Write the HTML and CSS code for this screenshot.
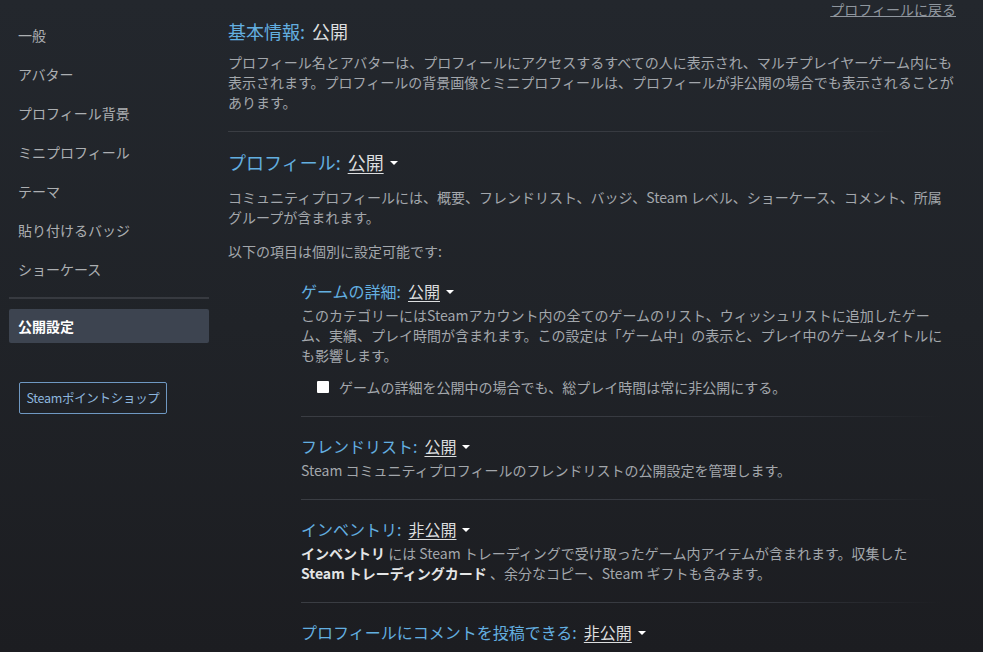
FILE: index.html
```html
<!DOCTYPE html>
<html lang="ja">
<head>
<meta charset="utf-8">
<link rel="stylesheet" href="styles.css">
</head>
<body>
<div class="page">
  <nav class="sidebar">
    <div class="nav-item">一般</div>
    <div class="nav-item">アバター</div>
    <div class="nav-item">プロフィール背景</div>
    <div class="nav-item">ミニプロフィール</div>
    <div class="nav-item">テーマ</div>
    <div class="nav-item">貼り付けるバッジ</div>
    <div class="nav-item">ショーケース</div>
    <div class="nav-sep"></div>
    <div class="nav-item active">公開設定</div>
    <div class="shop-btn">Steamポイントショップ</div>
  </nav>
  <main class="main">
    <div class="top-row"><a class="back-link">プロフィールに戻る</a></div>

    <div class="heading top h-basic"><span class="label">基本情報:</span><span class="value plain">公開</span></div>
    <p class="desc d-basic">プロフィール名とアバターは、プロフィールにアクセスするすべての人に表示され、マルチプレイヤーゲーム内にも<br>表示されます。プロフィールの背景画像とミニプロフィールは、プロフィールが非公開の場合でも表示されることが<br>あります。</p>
    <div class="sep sep-main"></div>

    <div class="heading top h-profile"><span class="label">プロフィール:</span><span class="value">公開</span><span class="caret"></span></div>
    <p class="desc d-profile">コミュニティプロフィールには、概要、フレンドリスト、バッジ、Steam レベル、ショーケース、コメント、所属<br>グループが含まれます。</p>
    <p class="desc d-note">以下の項目は個別に設定可能です:</p>

    <div class="sub">
      <div class="heading h-first"><span class="label">ゲームの詳細:</span><span class="value">公開</span><span class="caret"></span></div>
      <p class="desc sub-desc">このカテゴリーにはSteamアカウント内の全てのゲームのリスト、ウィッシュリストに追加したゲー<br>ム、実績、プレイ時間が含まれます。この設定は「ゲーム中」の表示と、プレイ中のゲームタイトルに<br>も影響します。</p>
      <label class="check-row"><span class="checkbox"></span><span>ゲームの詳細を公開中の場合でも、総プレイ時間は常に非公開にする。</span></label>
      <div class="sep sep-sub"></div>

      <div class="heading h-next"><span class="label">フレンドリスト:</span><span class="value">公開</span><span class="caret"></span></div>
      <p class="desc sub-desc">Steam コミュニティプロフィールのフレンドリストの公開設定を管理します。</p>
      <div class="sep sep-sub"></div>

      <div class="heading h-next"><span class="label">インベントリ:</span><span class="value">非公開</span><span class="caret"></span></div>
      <p class="desc sub-desc"><b>インベントリ</b> には Steam トレーディングで受け取ったゲーム内アイテムが含まれます。収集した<br><b>Steam トレーディングカード</b> 、余分なコピー、Steam ギフトも含みます。</p>
      <div class="sep sep-sub"></div>

      <div class="heading h-next"><span class="label">プロフィールにコメントを投稿できる:</span><span class="value">非公開</span><span class="caret"></span></div>
    </div>
  </main>
</div>
</body>
</html>
```

FILE: styles.css
```css
html, body {
  margin: 0;
  padding: 0;
}
body {
  width: 983px;
  height: 652px;
  overflow: hidden;
  background: linear-gradient(180deg, #23272d 0%, #202328 50%, #1c1d21 100%);
  font-family: "Noto Sans CJK JP", "Noto Sans", sans-serif;
  color: #a5a9ae;
}
.page {
  display: flex;
  align-items: flex-start;
}
.sidebar {
  width: 200px;
  margin-left: 9px;
  padding-top: 16px;
  display: flex;
  flex-direction: column;
}
.nav-item {
  height: 39px;
  line-height: 39px;
  padding-left: 9px;
  font-size: 14px;
  color: #acafb2;
}
.nav-sep {
  height: 2px;
  background: #373a40;
  margin-top: 8px;
}
.nav-item.active {
  margin-top: 10px;
  height: 34px;
  line-height: 34px;
  background: #3d4450;
  border-radius: 2px;
  color: #ffffff;
  font-weight: 700;
}
.shop-btn {
  margin-top: 39px;
  margin-left: 10px;
  width: 146px;
  height: 30px;
  line-height: 30px;
  border: 1px solid #6f98c2;
  border-radius: 2px;
  text-align: center;
  font-size: 12.5px;
  color: #8db6de;
  letter-spacing: -0.3px;
}
.main {
  margin-left: 19px;
  width: 730px;
}
.top-row {
  display: flex;
  justify-content: flex-end;
  height: 18px;
  padding-right: 2px;
}
.back-link {
  font-size: 14px;
  line-height: 18px;
  color: #8f969e;
  text-decoration: underline;
}
.heading {
  font-size: 16px;
  line-height: 24px;
  display: flex;
  align-items: center;
  white-space: nowrap;
}
.heading.top {
  font-size: 18px;
}
.label {
  color: #63afe0;
  margin-right: 7px;
}
.value {
  color: #dcdedf;
  text-decoration: underline;
  text-underline-offset: 3px;
}
.value.plain {
  text-decoration: none;
}
.caret {
  width: 0;
  height: 0;
  margin-left: 6px;
  margin-top: 2px;
  border-left: 4px solid transparent;
  border-right: 4px solid transparent;
  border-top: 4px solid #ffffff;
}
.h-basic {
  margin-top: 1px;
}
.desc {
  margin: 0;
  font-size: 14px;
  line-height: 20px;
  color: #a3a7ac;
  white-space: nowrap;
}
.desc b {
  color: #e4e5e6;
  font-weight: 700;
}
.d-basic {
  margin-top: 9px;
}
.sep {
  height: 1px;
  background: linear-gradient(90deg, #3a3d43 0%, #363940 70%, rgba(54,57,64,0) 100%);
}
.sep-main {
  margin-top: 19px;
  width: 670px;
}
.h-profile {
  margin-top: 18px;
}
.d-profile {
  margin-top: 13px;
}
.d-note {
  margin-top: 14px;
}
.sub {
  margin-left: 73px;
  width: 650px;
}
.h-first {
  margin-top: 18px;
}
.sub-desc {
  margin-top: 2px;
}
.check-row {
  display: flex;
  align-items: center;
  margin-top: 12px;
  margin-left: 16px;
  height: 20px;
  font-size: 14px;
  color: #a3a7ac;
}
.checkbox {
  width: 12px;
  height: 12px;
  background: #ffffff;
  border-radius: 1px;
  margin-right: 10px;
}
.sep-sub {
  margin-top: 19px;
  width: 640px;
}
.h-next {
  margin-top: 17px;
}
```
